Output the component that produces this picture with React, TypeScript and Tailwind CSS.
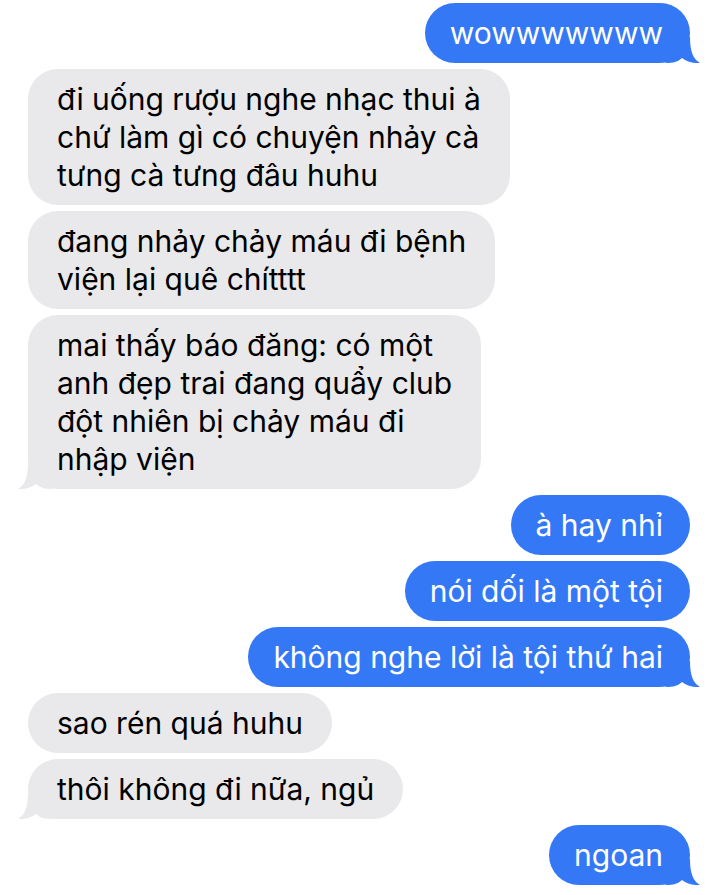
type Msg = { me: boolean; lines: string[]; tail?: boolean };

const messages: Msg[] = [
  { me: true, lines: ["wowwwwwww"], tail: true },
  {
    me: false,
    lines: ["đi uống rượu nghe nhạc thui à", "chứ làm gì có chuyện nhảy cà", "tưng cà tưng đâu huhu"],
  },
  { me: false, lines: ["đang nhảy chảy máu đi bệnh", "viện lại quê chítttt"] },
  {
    me: false,
    lines: ["mai thấy báo đăng: có một", "anh đẹp trai đang quẩy club", "đột nhiên bị chảy máu đi", "nhập viện"],
    tail: true,
  },
  { me: true, lines: ["à hay nhỉ"] },
  { me: true, lines: ["nói dối là một tội"] },
  { me: true, lines: ["không nghe lời là tội thứ hai"], tail: true },
  { me: false, lines: ["sao rén quá huhu"] },
  { me: false, lines: ["thôi không đi nữa, ngủ"], tail: true },
  { me: true, lines: ["ngoan"], tail: true },
];

const Tail = ({ me }: { me: boolean }) => (
  <svg
    viewBox="0 0 34 26"
    className={
      me
        ? "absolute -right-[10px] bottom-0 w-[34px] h-[26px] text-[#3478f6]"
        : "absolute -left-[10px] bottom-0 w-[34px] h-[26px] -scale-x-100 text-[#e9e9eb]"
    }
  >
    <path
      d="M0 0 L24 0 C24 14 27 22 34 26 C28 26.5 21 25 16 21 C12 25 7 26 0 26 Z"
      fill="currentColor"
    />
  </svg>
);

export default function App() {
  return (
    <div
      className="w-[719px] h-[895px] bg-white overflow-hidden flex flex-col gap-[6px] pt-[3px] pl-[28px] pr-[29px]"
      style={{ fontFamily: "Inter, 'Noto Sans', sans-serif" }}
    >
      {messages.map((m, i) => (
        <div
          key={i}
          className={
            m.me
              ? "relative self-end rounded-[30px] bg-[#3478f6] text-white pl-[25px] pr-[27px] py-[11px] text-[30px] leading-[38px] whitespace-nowrap"
              : "relative self-start rounded-[30px] bg-[#e9e9eb] text-black px-[29px] py-[11px] text-[30px] leading-[38px] whitespace-nowrap"
          }
        >
          {m.lines.map((l, j) => (
            <div key={j}>{l}</div>
          ))}
          {m.tail && <Tail me={m.me} />}
        </div>
      ))}
    </div>
  );
}
